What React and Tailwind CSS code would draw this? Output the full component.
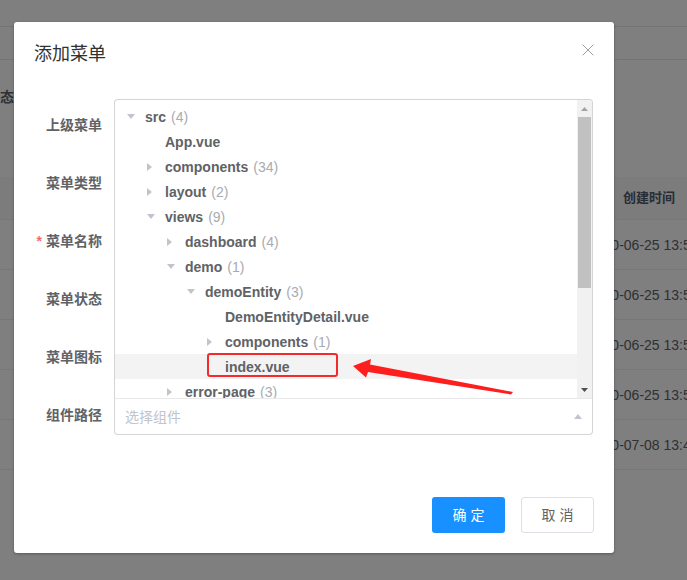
import { X } from 'lucide-react'

const tree = [
  { level: 0, name: 'src', count: 4, open: true },
  { level: 1, name: 'App.vue' },
  { level: 1, name: 'components', count: 34, open: false },
  { level: 1, name: 'layout', count: 2, open: false },
  { level: 1, name: 'views', count: 9, open: true },
  { level: 2, name: 'dashboard', count: 4, open: false },
  { level: 2, name: 'demo', count: 1, open: true },
  { level: 3, name: 'demoEntity', count: 3, open: true },
  { level: 4, name: 'DemoEntityDetail.vue' },
  { level: 4, name: 'components', count: 1, open: false },
  { level: 4, name: 'index.vue', active: true },
  { level: 2, name: 'error-page', count: 3, open: false },
]

const indent = ['pl-[12px]', 'pl-[32px]', 'pl-[52px]', 'pl-[72px]', 'pl-[92px]']

const rows = ['2020-06-25 13:54:12', '2020-06-25 13:55:01', '2020-06-25 13:55:40', '2020-06-25 13:56:18', '2020-07-08 13:42:09']

const labels = ['上级菜单', '菜单类型', '菜单名称', '菜单状态', '菜单图标']

const Caret = ({ open }) => (
  open ? (
    <svg width="8" height="5" viewBox="0 0 8 5"><path d="M0 0h8L4 5z" fill="#c0c4cc" /></svg>
  ) : (
    <svg width="5" height="8" viewBox="0 0 5 8"><path d="M0 0l5 4-5 4z" fill="#c0c4cc" /></svg>
  )
)

const TreeRow = ({ item }) => (
  <div className={`flex items-center h-[25px] ${indent[item.level]} ${item.active ? 'bg-[#f3f3f3]' : ''}`}>
    <span className="w-[18px] flex items-center">
      {item.count !== undefined && <Caret open={item.open} />}
    </span>
    <span className="font-bold text-[#606266] whitespace-nowrap">{item.name}</span>
    {item.count !== undefined && (
      <span className="ml-[5px] text-[#a8abb2]">({item.count})</span>
    )}
  </div>
)

const FormLabel = ({ text, required }) => (
  <div className="w-[80px] h-[36px] leading-[36px] text-right pr-3 font-bold text-[#606266] whitespace-nowrap">
    {required && <span className="text-[#f56c6c] mr-1">*</span>}
    {text}
  </div>
)

export default function App() {
  return (
    <div className="relative w-[687px] h-[580px] overflow-hidden bg-white text-sm font-['Liberation_Sans','Noto_Sans_CJK_SC',sans-serif]">
      {/* page behind the dialog */}
      <div className="h-[27px] border-b border-[#e6e6e6]" />
      <div className="h-[33px] border-b border-[#e6e6e6]" />
      <div className="h-[117px] pt-[27px]">
        <span className="block -ml-[14px] font-bold text-[#606266] leading-5">状态</span>
      </div>
      <div className="h-[43px] bg-[#f8f8f9] border-b border-[#ebeef5] flex items-center">
        <span className="ml-[623px] text-[13px] font-bold text-[#515a6e] whitespace-nowrap">创建时间</span>
      </div>
      {rows.map((r, i) => (
        <div key={i} className="h-[50px] border-b border-[#ebeef5] flex items-center">
          <span className="ml-[588px] text-[#606266] whitespace-nowrap">{r}</span>
        </div>
      ))}

      <div className="absolute inset-0 bg-black/50" />

      {/* dialog */}
      <div className="absolute left-[14px] top-[22px] w-[600px] h-[531px] bg-white rounded-[3px] shadow-[0_1px_3px_rgba(0,0,0,0.3)] flex flex-col">
        <div className="relative px-5 pt-5">
          <div className="text-[18px] leading-6 text-[#303133]">添加菜单</div>
          <X className="absolute right-[16px] top-[18px] text-[#909399]" size={20} strokeWidth={1.1} />
        </div>

        <div className="pt-[41px] px-5 flex flex-col gap-[22px]">
          {labels.map((l, i) => (
            <div key={l} className="flex">
              <FormLabel text={l} required={i === 2} />
            </div>
          ))}
          <div className="flex items-start">
            <FormLabel text="组件路径" />
            <div className="relative w-[479px] mt-[1px]">
              <div className="absolute bottom-full left-0 w-full h-[299px] bg-white border border-b-0 border-[#d4d4d4] rounded-t-[4px] flex overflow-hidden">
                <div className="flex-1 pt-[4px] overflow-hidden">
                  {tree.map((t, i) => <TreeRow key={i} item={t} />)}
                </div>
                <div className="w-[15px] bg-[#f1f1f1] flex flex-col">
                  <div className="h-[17px] flex items-center justify-center">
                    <svg width="7" height="4" viewBox="0 0 7 4"><path d="M3.5 0L7 4H0z" fill="#a3a3a3" /></svg>
                  </div>
                  <div className="flex-1 px-[1px]">
                    <div className="h-[171px] bg-[#c1c1c1]" />
                  </div>
                  <div className="h-[17px] flex items-center justify-center">
                    <svg width="7" height="4" viewBox="0 0 7 4"><path d="M0 0h7L3.5 4z" fill="#505050" /></svg>
                  </div>
                </div>
              </div>
              <div className="h-[37px] border border-[#d4d4d4] border-t-[#e8e8e8] rounded-b-[4px] flex items-center justify-between pl-[10px] pr-[10px]">
                <span className="text-[#c0c4cc]">选择组件</span>
                <svg width="8" height="5" viewBox="0 0 8 5"><path d="M4 0l4 5H0z" fill="#c0c4cc" /></svg>
              </div>
            </div>
          </div>
        </div>

        <div className="mt-auto flex justify-end gap-4 px-5 pb-5">
          <button className="w-[73px] h-[36px] rounded-[3px] bg-[#1890ff] text-white">确 定</button>
          <button className="w-[73px] h-[36px] rounded-[3px] border border-[#dcdfe6] bg-white text-[#606266]">取 消</button>
        </div>
      </div>

      {/* annotation */}
      <div className="absolute left-[207px] top-[353px] w-[131px] h-[24px] border-2 border-[#f52a2a] rounded-[3px]" />
      <svg className="absolute left-0 top-0 pointer-events-none" width="687" height="580" viewBox="0 0 687 580">
        <polygon points="353,366 371,359 370,364.5 513,392 511,394.5 368,372 366,377.5" fill="#fe1e1e" />
      </svg>
    </div>
  )
}
